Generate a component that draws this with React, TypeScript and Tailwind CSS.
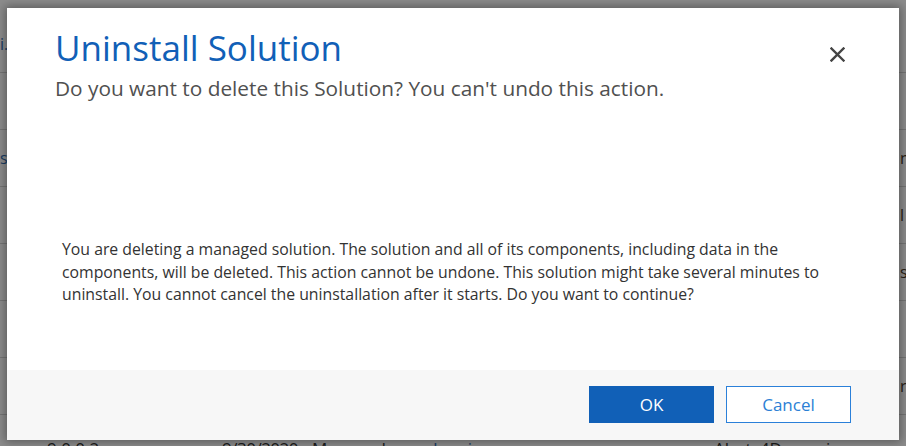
import React from "react";

const rows = [
  { l: "i.", r: "" },
  { l: "", r: "" },
  { l: "s", r: "n" },
  { l: "", r: "l" },
  { l: "", r: "s" },
  { l: "", r: "" },
  { l: "", r: "r" },
];

export default function App() {
  const font = { fontFamily: '"Open Sans", "Noto Sans", sans-serif' };
  return (
    <div className="relative h-[446px] w-[906px] overflow-hidden bg-white" style={font}>
      {/* page behind the dialog */}
      <div className="flex flex-col pt-[16px] text-[16px] text-[#333]">
        {rows.map((r, i) => (
          <div key={i} className="flex h-[57px] items-center justify-between border-b border-[#d6d6d6]">
            <div className="w-[7px] overflow-hidden whitespace-nowrap text-right text-[#2f6cb3]">{r.l}</div>
            <div className="w-[7px] overflow-hidden whitespace-nowrap pl-[1px] text-[#4a3a2a]">{r.r}</div>
          </div>
        ))}
        <div className="flex h-[57px] items-start pt-[21px] text-[17px]">
          <div className="w-[47px]" />
          <div className="w-[175px]">9.0.0.2</div>
          <div className="w-[90px] tracking-[-0.5px]">9/30/2020</div>
          <div className="w-[121px]">Managed</div>
          <div className="w-[281px] text-[#2f6cb3]">Inogic</div>
          <div className="whitespace-nowrap">Alerts4Dynamics</div>
        </div>
      </div>
      {/* overlay */}
      <div className="absolute inset-0 bg-black/45" />
      {/* dialog */}
      <div className="absolute left-[7px] top-[8px] flex h-[432px] w-[892px] flex-col bg-white shadow-[0_0_9px_2px_rgba(0,0,0,0.35)]">
        <div className="flex items-start justify-between pl-[48px] pr-[54px] pt-[17px]">
          <div>
            <h1 className="text-[35px] leading-[46px] text-[#1160b7]">Uninstall Solution</h1>
            <p className="mt-[3px] text-[20.8px] leading-[28px] text-[#505050]">
              Do you want to delete this Solution? You can't undo this action.
            </p>
          </div>
          <button className="mt-[21px] flex h-[16px] w-[16px] items-center justify-center" aria-label="Close">
            <svg width="15" height="15" viewBox="0 0 15 15">
              <path d="M1.5 1.5 L13.5 13.5 M13.5 1.5 L1.5 13.5" stroke="#444" strokeWidth="2.4" strokeLinecap="square" />
            </svg>
          </button>
        </div>
        <div className="flex-1 pl-[55px] pr-[67px] pt-[136px]">
          <p className="text-[15.8px] leading-[22.5px] text-[#333]">
            You are deleting a managed solution. The solution and all of its components, including data in the
            components, will be deleted. This action cannot be undone. This solution might take several minutes to
            uninstall. You cannot cancel the uninstallation after it starts. Do you want to continue?
          </p>
        </div>
        <div className="flex h-[70px] items-start justify-end gap-[12px] bg-[#f7f7f7] pr-[48px] pt-[16px]">
          <button className="h-[37px] w-[125px] bg-[#1160b7] text-[17px] text-white">OK</button>
          <button className="h-[37px] w-[125px] border border-[#2b80d9] bg-white text-[17px] text-[#2b7fd5]">
            Cancel
          </button>
        </div>
      </div>
    </div>
  );
}
